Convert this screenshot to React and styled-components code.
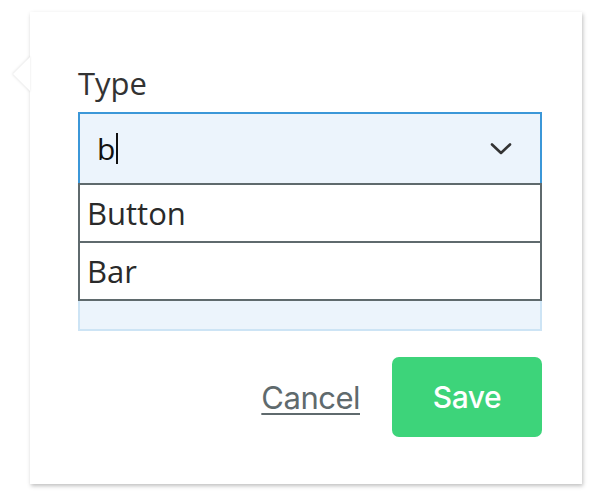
import React from 'react';
import styled, { createGlobalStyle } from 'styled-components';

const GlobalStyle = createGlobalStyle`
  body {
    margin: 0;
    background: #ffffff;
    font-family: "Open Sans", "Noto Sans", sans-serif;
  }
`;

const Page = styled.div`
  min-height: 500px;
  box-sizing: border-box;
  padding: 12px 0 16px 30px;
`;

const Popover = styled.div`
  position: relative;
  box-sizing: border-box;
  width: 552px;
  height: 472px;
  padding: 52px 40px 0 48px;
  background: #ffffff;
  box-shadow: 1px 2px 4px rgba(0, 0, 0, 0.25);

  &::before {
    content: '';
    position: absolute;
    left: -18px;
    top: 44px;
    width: 0;
    height: 0;
    border-top: 18px solid transparent;
    border-bottom: 18px solid transparent;
    border-right: 18px solid rgba(0, 0, 0, 0.1);
    filter: blur(1px);
  }

  &::after {
    content: '';
    position: absolute;
    left: -17px;
    top: 45px;
    width: 0;
    height: 0;
    border-top: 17px solid transparent;
    border-bottom: 17px solid transparent;
    border-right: 17px solid #ffffff;
  }
`;

const Label = styled.label`
  display: block;
  font-size: 31px;
  line-height: 38px;
  color: #333333;
  margin-bottom: 10px;
`;

const Field = styled.div`
  display: flex;
  flex-direction: column;
`;

const Control = styled.div`
  box-sizing: border-box;
  height: 71px;
  display: flex;
  align-items: center;
  justify-content: space-between;
  padding: 0 28px 0 17px;
  background: #ecf4fc;
  border: 2px solid #3b97d8;
  border-bottom: none;
`;

const Value = styled.span`
  font-size: 30px;
  color: #111111;
  display: flex;
  align-items: center;
`;

const Caret = styled.span`
  display: inline-block;
  width: 1.5px;
  height: 31px;
  background: #111111;
  margin-left: 1px;
`;

const Menu = styled.ul`
  list-style: none;
  margin: 0;
  padding: 0;
  border: 2px solid #5f6a6d;
  border-bottom: none;
`;

const Option = styled.li`
  box-sizing: border-box;
  height: 58px;
  display: flex;
  align-items: center;
  padding: 0 7px;
  font-size: 31px;
  color: #2a2a2a;
  border-bottom: 2px solid #5f6a6d;
`;

const MenuTail = styled.div`
  height: 28px;
  background: #ecf4fc;
  border: 2px solid #cde4f5;
  border-top: none;
`;

const Actions = styled.div`
  display: flex;
  justify-content: flex-end;
  align-items: center;
  gap: 32px;
  margin-top: 26px;
`;

const CancelLink = styled.a`
  font-family: Inter, "Liberation Sans", sans-serif;
  font-size: 31px;
  color: #5f6a6d;
  text-decoration: underline;
  text-underline-offset: 4px;
  text-decoration-thickness: 2px;
  letter-spacing: -0.5px;
`;

const SaveButton = styled.button`
  width: 150px;
  height: 80px;
  border: none;
  border-radius: 7px;
  background: #3dd47a;
  color: #ffffff;
  font-family: Inter, "Liberation Sans", sans-serif;
  font-size: 30px;
  font-weight: 500;
  letter-spacing: -0.4px;
`;

const Chevron = () => (
  <svg width="22" height="14" viewBox="0 0 22 14" fill="none">
    <path d="M2 2.5 L11 11 L20 2.5" stroke="#333" strokeWidth="2.6" strokeLinecap="round" strokeLinejoin="round" />
  </svg>
);

export default function App() {
  return (
    <>
      <GlobalStyle />
      <Page>
        <Popover>
          <Label>Type</Label>
          <Field>
            <Control>
              <Value>
                b<Caret />
              </Value>
              <Chevron />
            </Control>
            <Menu>
              <Option>Button</Option>
              <Option>Bar</Option>
            </Menu>
            <MenuTail />
          </Field>
          <Actions>
            <CancelLink>Cancel</CancelLink>
            <SaveButton>Save</SaveButton>
          </Actions>
        </Popover>
      </Page>
    </>
  );
}
